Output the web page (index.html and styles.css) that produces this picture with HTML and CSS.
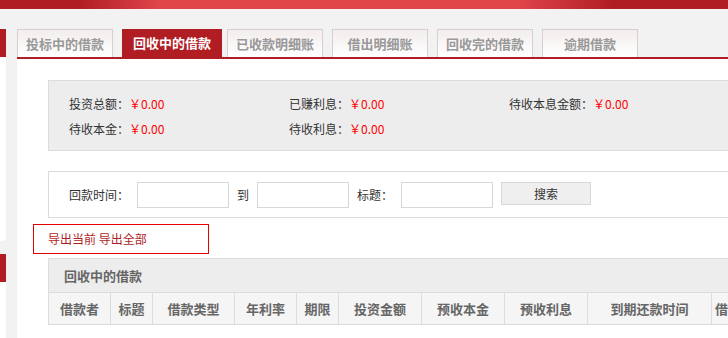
FILE: index.html
```html
<!DOCTYPE html>
<html lang="zh-CN">
<head>
    <meta charset="UTF-8">
    <meta name="viewport" content="width=device-width, initial-scale=1.0">
    <title>回收中的借款</title>
    <link rel="stylesheet" href="styles.css">
</head>
<body>
    <div class="topbar"></div>

    <div class="layout">
        <div class="sidebar">
            <div class="side-box first">
                <div class="side-head"></div>
                <div class="side-body"></div>
            </div>
            <div class="side-box">
                <div class="side-head"></div>
                <div class="side-body"></div>
            </div>
        </div>

        <div class="main">
            <ul class="tabs">
                <li class="tab">投标中的借款</li>
                <li class="tab active">回收中的借款</li>
                <li class="tab">已收款明细账</li>
                <li class="tab">借出明细账</li>
                <li class="tab">回收完的借款</li>
                <li class="tab">逾期借款</li>
            </ul>

            <div class="panel">
                <div class="summary">
                    <div class="item">投资总额：<span class="money">￥0.00</span></div>
                    <div class="item">已赚利息：<span class="money">￥0.00</span></div>
                    <div class="item">待收本息金额：<span class="money">￥0.00</span></div>
                    <div class="item">待收本金：<span class="money">￥0.00</span></div>
                    <div class="item">待收利息：<span class="money">￥0.00</span></div>
                </div>

                <div class="search">
                    <span class="label">回款时间：</span>
                    <input type="text" class="field">
                    <span class="label">到</span>
                    <input type="text" class="field">
                    <span class="label">标题：</span>
                    <input type="text" class="field">
                    <button class="search-btn">搜索</button>
                </div>

                <div class="export">
                    <a href="#">导出当前</a> <a href="#">导出全部</a>
                </div>

                <table class="list">
                    <colgroup>
                        <col class="c1">
                        <col class="c2">
                        <col class="c3">
                        <col class="c4">
                        <col class="c5">
                        <col class="c6">
                        <col class="c7">
                        <col class="c8">
                        <col class="c9">
                        <col>
                    </colgroup>
                    <thead>
                        <tr class="title-row">
                            <th colspan="10">回收中的借款</th>
                        </tr>
                        <tr class="head-row">
                            <th>借款者</th>
                            <th>标题</th>
                            <th>借款类型</th>
                            <th>年利率</th>
                            <th>期限</th>
                            <th>投资金额</th>
                            <th>预收本金</th>
                            <th>预收利息</th>
                            <th>到期还款时间</th>
                            <th class="last">借款状态</th>
                        </tr>
                    </thead>
                </table>
            </div>
        </div>
    </div>
</body>
</html>
```

FILE: styles.css
```css
body {
    margin: 0;
    background-color: #f2f2f2;
    font-family: "Noto Sans CJK SC", "Liberation Sans", sans-serif;
    font-size: 12px;
    color: #333;
    overflow: hidden;
}

.topbar {
    height: 9px;
    background: linear-gradient(to right, #b01e24 0, #b01e24 11%, #e0454a 22%, #e0454a 71%, #b01e24 84%, #b01e24 100%);
}

.layout {
    display: flex;
    padding-top: 20px;
}

.sidebar {
    flex: none;
    width: 6px;
    margin-right: 11px;
}

.side-box {
    background-color: #fff;
}

.side-box.first {
    height: 212px;
    margin-bottom: 13px;
    border-bottom-right-radius: 4px;
}

.side-box:not(.first) {
    height: 120px;
}

.side-head {
    height: 28px;
    background-color: #b01e24;
}

.main {
    flex: none;
    width: 820px;
}

.tabs {
    display: flex;
    margin: 0;
    padding: 0;
    list-style: none;
    border-bottom: 2px solid #b01e24;
}

.tab {
    width: 94px;
    height: 27px;
    margin-right: 9px;
    border: 1px solid #d6cfcf;
    border-bottom: none;
    background: linear-gradient(to bottom, #f3eded, #ffffff);
    color: #999;
    font-size: 13px;
    font-weight: bold;
    line-height: 27px;
    text-align: center;
}

.tab.active {
    width: 100px;
    height: 28px;
    margin-right: 5px;
    border: none;
    background: #b01e24;
    color: #fff;
    line-height: 28px;
}

.panel {
    background-color: #fff;
    padding: 21px 0 20px 31px;
}

.summary {
    display: grid;
    grid-template-columns: repeat(3, 220px);
    grid-auto-rows: 25px;
    align-items: center;
    padding: 10px 20px 9px;
    background-color: #ededed;
    border: 1px solid #dcdcdc;
}

.money {
    color: #f00;
}

.search {
    display: flex;
    align-items: flex-start;
    gap: 8px;
    margin-top: 20px;
    padding: 10px 20px 9px;
    border: 1px solid #dcdcdc;
}

.search .label {
    line-height: 26px;
}

.field {
    width: 88px;
    height: 22px;
    margin: 0;
    padding: 1px;
    border: 1px solid #d8d8d8;
    background-color: #fff;
}

.search-btn {
    width: 90px;
    height: 23px;
    margin: 0;
    padding: 0;
    border: 1px solid #d8d8d8;
    background-color: #efefef;
    font-family: inherit;
    font-size: 12px;
    color: #333;
}

.export {
    width: 160px;
    height: 28px;
    margin: 6px 0 4px -15px;
    padding-left: 14px;
    border: 1px solid #e60000;
    line-height: 28px;
}

.export a {
    color: #b01e24;
    text-decoration: none;
}

.list {
    width: 100%;
    border-collapse: collapse;
    table-layout: fixed;
}

.list th {
    border: 1px solid #dcdcdc;
    color: #666;
    font-size: 13px;
    font-weight: bold;
}

.title-row th {
    height: 33px;
    padding: 0 0 0 15px;
    background-color: #ededed;
    text-align: left;
    border-right: none;
}

.head-row th {
    height: 31px;
    padding: 0;
    background-color: #f5f5f5;
    text-align: center;
    white-space: nowrap;
    overflow: hidden;
}

.head-row .last {
    text-align: left;
    padding-left: 3px;
}

.c1 { width: 62px; }
.c2 { width: 42px; }
.c3 { width: 82px; }
.c4 { width: 62px; }
.c5 { width: 42px; }
.c6 { width: 83px; }
.c7 { width: 83px; }
.c8 { width: 83px; }
.c9 { width: 124px; }
```
